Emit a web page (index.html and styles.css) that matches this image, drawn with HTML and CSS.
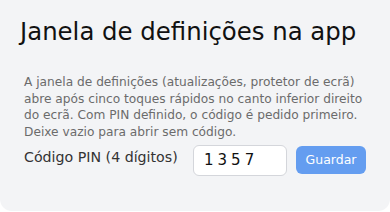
FILE: index.html
```html
<!DOCTYPE html>
<html lang="pt">
<head>
<meta charset="utf-8">
<link rel="stylesheet" href="styles.css">
</head>
<body>
<section class="card">
  <h1 class="title">Janela de definições na app</h1>
  <div class="content">
    <p class="desc">A janela de definições (atualizações, protetor de ecrã) abre após cinco toques rápidos no canto inferior direito do ecrã. Com PIN definido, o código é pedido primeiro. Deixe vazio para abrir sem código.</p>
    <div class="row">
      <label class="label" for="pin">Código PIN (4 dígitos)</label>
      <input class="pin" id="pin" type="text" value="1357" maxlength="4">
      <button class="save" type="button">Guardar</button>
    </div>
  </div>
</section>
</body>
</html>
```
FILE: styles.css
```css
html, body {
  margin: 0;
  padding: 0;
  background: #ffffff;
}
body {
  font-family: "DejaVu Sans", sans-serif;
}
.card {
  box-sizing: border-box;
  width: 390px;
  height: 211px;
  background: #f3f4f6;
  border-radius: 0 0 12px 12px;
  padding: 16px 0 0;
}
.title {
  margin: 0;
  padding-left: 20px;
  font-size: 24.4px;
  font-weight: 400;
  color: #111111;
  line-height: 32px;
}
.content {
  padding: 0 18px 0 24px;
}
.desc {
  width: 348px;
  margin: 26px 0 0;
  font-size: 12.2px;
  line-height: 16.7px;
  color: #6b6b6b;
}
.row {
  display: flex;
  align-items: flex-start;
  margin-top: 4px;
}
.label {
  font-size: 14.2px;
  color: #333333;
  line-height: 20px;
  padding-top: 2px;
  width: 169px;
}
.pin {
  box-sizing: border-box;
  width: 94px;
  height: 31px;
  border: 1px solid #d4d6db;
  border-radius: 6px;
  background: #ffffff;
  padding: 0 10px;
  font-family: "DejaVu Sans", sans-serif;
  font-size: 15px;
  letter-spacing: 4px;
  color: #111111;
  outline: none;
}
.save {
  margin-left: 9px;
  margin-top: 1px;
  width: 70px;
  height: 28px;
  border: 0;
  border-radius: 6px;
  background: #649df0;
  color: #ffffff;
  font-family: "DejaVu Sans", sans-serif;
  font-size: 12.5px;
  font-weight: 500;
  padding: 0;
}
```
